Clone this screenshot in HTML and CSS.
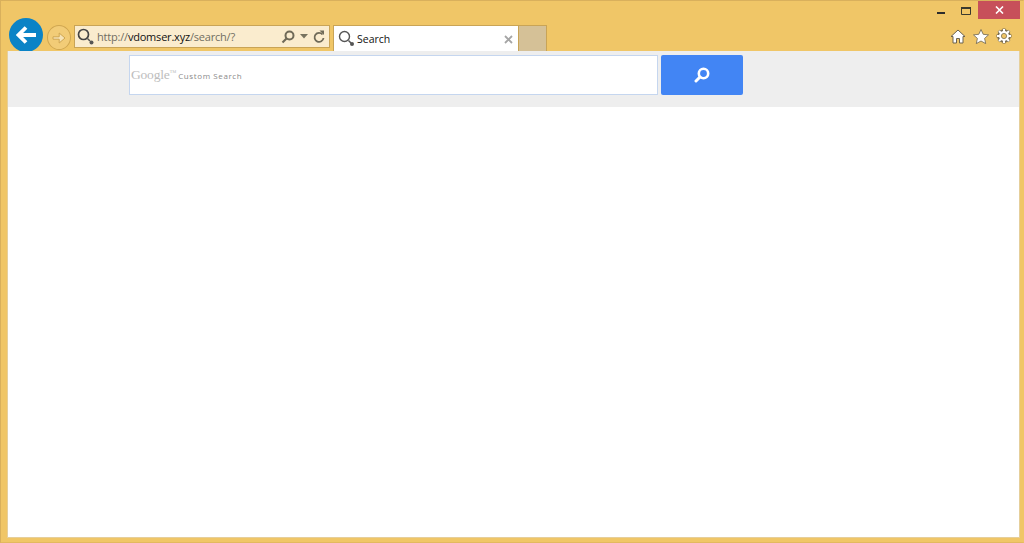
FILE: index.html
```html
<!DOCTYPE html>
<html lang="en">
<head>
<meta charset="utf-8">
<title>Search</title>
<link rel="stylesheet" href="styles.css">
</head>
<body>
<div class="window">
  <header class="chrome">
    <nav class="nav">
      <button class="back" aria-label="Back">
        <svg width="20" height="18" viewBox="0 0 20 18"><path d="M20 9H3M10 1.500L2.500 9l7.500 7.500" fill="none" stroke="#fff" stroke-width="3.800"/></svg>
      </button>
      <button class="forward" aria-label="Forward">
        <svg width="14" height="14" viewBox="0 0 14 14"><path d="M1 5.800h6.200V2L13 7l-5.800 5V8.200H1z" fill="#f6e3b6" stroke="#cfa650" stroke-width="1"/></svg>
      </button>
      <div class="address">
        <svg class="addr-icon" width="18" height="18" viewBox="0 0 18 18"><circle cx="6.500" cy="6.500" r="5" fill="none" stroke="#444" stroke-width="1.700"/><path d="M10.500 10.500l2.500 2.500" stroke="#555" stroke-width="1.500"/><circle cx="14.500" cy="14.500" r="2" fill="#555"/></svg>
        <span class="url"><span class="dim">http://</span>vdomser.xyz<span class="dim">/search/?</span></span>
        <svg class="addr-tool" width="14" height="14" viewBox="0 0 14 14"><circle cx="8.500" cy="5.500" r="4" fill="none" stroke="#6f6a58" stroke-width="2"/><path d="M5.500 8.500L1.500 12.500" stroke="#6f6a58" stroke-width="2.200"/></svg>
        <svg class="addr-caret" width="8" height="5" viewBox="0 0 8 5"><path d="M0 0h8L4 4.500z" fill="#77735f"/></svg>
        <svg class="addr-reload" width="12" height="14" viewBox="0 0 12 14"><path d="M9.500 4.500A4.500 4.500 0 1 0 10.500 8" fill="none" stroke="#6f6a58" stroke-width="1.800"/><path d="M6.500 0.500h4.500v4.500z" fill="#6f6a58"/></svg>
      </div>
      <div class="tab">
        <svg class="tab-icon" width="18" height="18" viewBox="0 0 18 18"><circle cx="6.500" cy="6.500" r="5" fill="none" stroke="#555" stroke-width="1.400"/><path d="M10.500 10.500l2.500 2.500" stroke="#555" stroke-width="1.500"/><circle cx="14" cy="14" r="2" fill="#555"/></svg>
        <span class="tab-title">Search</span>
        <svg class="tab-close" width="9" height="9" viewBox="0 0 9 9"><path d="M1 1l7 7M8 1L1 8" stroke="#a5a5a5" stroke-width="1.800"/></svg>
      </div>
      <div class="new-tab"></div>
    </nav>
    <div class="right">
      <div class="controls">
        <svg width="8" height="2" viewBox="0 0 8 2" class="min"><path d="M0 0h8v2H0z" fill="#2c2c2c"/></svg>
        <svg width="10" height="8" viewBox="0 0 10 8" class="max"><path d="M.500.500h9v7h-9z" fill="none" stroke="#3a3a2e"/><path d="M0 0h10v2H0z" fill="#3a3a2e"/></svg>
        <div class="close"><svg width="9" height="8" viewBox="0 0 9 8"><path d="M1 .500l7 7M8 .500l-7 7" stroke="#fff" stroke-width="1.600"/></svg></div>
      </div>
      <div class="tools">
        <svg width="16" height="15" viewBox="0 0 16 15"><path d="M8 1L1 7.500h2V14h3.500V9.500h3V14H13V7.500h2z" fill="#fff" stroke="#6b6350" stroke-width="1"/></svg>
        <svg width="16" height="15" viewBox="0 0 16 15"><path d="M8 .5l2.200 4.800 5.300.6-3.900 3.500 1.100 5.200L8 12l-4.700 2.600 1.100-5.200L.5 5.900l5.300-.6z" fill="#fff" stroke="#6b6350" stroke-width=".8"/></svg>
        <svg width="16" height="16" viewBox="0 0 16 16"><circle cx="8" cy="8" r="5" fill="none" stroke="#7a6f55" stroke-width="3.600"/><path d="M8 .5v15M.5 8h15M2.700 2.700l10.600 10.600M13.300 2.700L2.700 13.300" stroke="#7a6f55" stroke-width="3"/><circle cx="8" cy="8" r="5" fill="#fff"/><path d="M8 1v14M1 8h14M3 3l10 10M13 3L3 13" stroke="#fff" stroke-width="2"/><circle cx="8" cy="8" r="2.600" fill="#f0c667" stroke="#7a6f55" stroke-width=".8"/></svg>
      </div>
    </div>
  </header>
  <main class="page">
    <section class="band">
      <div class="search-input"><span class="google">Google<sup class="tm">™</sup></span><span class="custom">Custom Search</span></div>
      <button class="search-btn" aria-label="Search">
        <svg width="16" height="16" viewBox="0 0 16 16"><circle cx="9.500" cy="6.500" r="4.700" fill="none" stroke="#fff" stroke-width="2.600"/><path d="M6 10l-4 4" stroke="#fff" stroke-width="3" stroke-linecap="round"/></svg>
      </button>
    </section>
  </main>
</div>
</body>
</html>
```
FILE: styles.css
```css
* { box-sizing: border-box; }
html, body { margin: 0; height: 100%; }
body { overflow: hidden; background: #f0c667; font-family: "Open Sans", "Liberation Sans", sans-serif; }
button { border: 0; padding: 0; font: inherit; }
svg { display: block; flex: none; }

.window { height: 543px; display: flex; flex-direction: column; border: 1px solid #d9b05c; border-right-color: #f0c667; border-bottom-color: #e3b95f; padding: 0 3px 4px 6px; }
.chrome { height: 50px; flex: none; display: flex; justify-content: space-between; }

.nav { display: flex; align-items: flex-end; margin-left: 2px; }
.back { width: 34px; height: 34px; margin-bottom: -1px; border-radius: 50%; background: #0a83c6; display: flex; align-items: center; justify-content: center; }
.forward { width: 24px; height: 25px; margin: 0 3px 1px 4px; border-radius: 50%; background: #f2cc77; border: 1px solid #cfa650; display: flex; align-items: center; justify-content: center; }
.address { width: 256px; height: 23px; margin-bottom: 3px; background: #faecce; border: 1px solid #c9a456; display: flex; align-items: center; padding: 0 3px 0 2px; }
.addr-icon { margin-right: 2px; }
.url { flex: 1; font-size: 11px; letter-spacing: -.2px; color: #111; white-space: nowrap; }
.dim { color: #716e62; }
.addr-tool { margin-right: 5px; }
.addr-caret { margin-right: 5px; }
.addr-reload { margin-right: 1px; }

.tab { width: 186px; height: 26px; margin-left: 3px; background: #fff; border: 1px solid #c9a456; border-bottom: 0; display: flex; align-items: center; padding: 1px 5px 0 4px; }
.tab-icon { margin-right: 1px; }
.tab-title { flex: 1; font-size: 10.500px; color: #111; }
.new-tab { width: 28px; height: 26px; background: #d5c197; border: 1px solid #c9a456; border-left: 0; border-bottom: 0; }

.right { width: 120px; display: flex; flex-direction: column; align-items: flex-end; }
.controls { height: 18px; display: flex; align-items: flex-start; }
.min { margin-top: 11px; margin-right: 16px; }
.max { margin-top: 6px; margin-right: 7px; }
.close { width: 42px; height: 18px; background: #c7505a; display: flex; align-items: center; justify-content: center; }
.tools { display: flex; gap: 7px; margin-top: 9px; margin-right: 8px; align-items: center; }

.page { flex: 1; background: #fff; border: 1px solid #e6cf9b; border-top: 0; }
.band { height: 56px; background: #eeeeee; display: flex; align-items: flex-start; padding: 4px 0 0 121px; gap: 3px; }
.search-input { width: 529px; height: 40px; background: #fff; border: 1px solid #c5d6ef; display: flex; align-items: center; padding-left: 1px; color: #9a9a9a; }
.google { font-family: "Liberation Serif", serif; font-size: 13.500px; color: #bdbdbd; letter-spacing: -.2px; }
.tm { font-size: 7px; vertical-align: 4px; line-height: 0; }
.custom { font-family: "Open Sans", sans-serif; font-size: 8px; letter-spacing: .6px; color: #8a8a8a; margin-left: 2px; }
.search-btn { width: 82px; height: 40px; border-radius: 2px; background: #4285f4; display: flex; align-items: center; justify-content: center; }
```
